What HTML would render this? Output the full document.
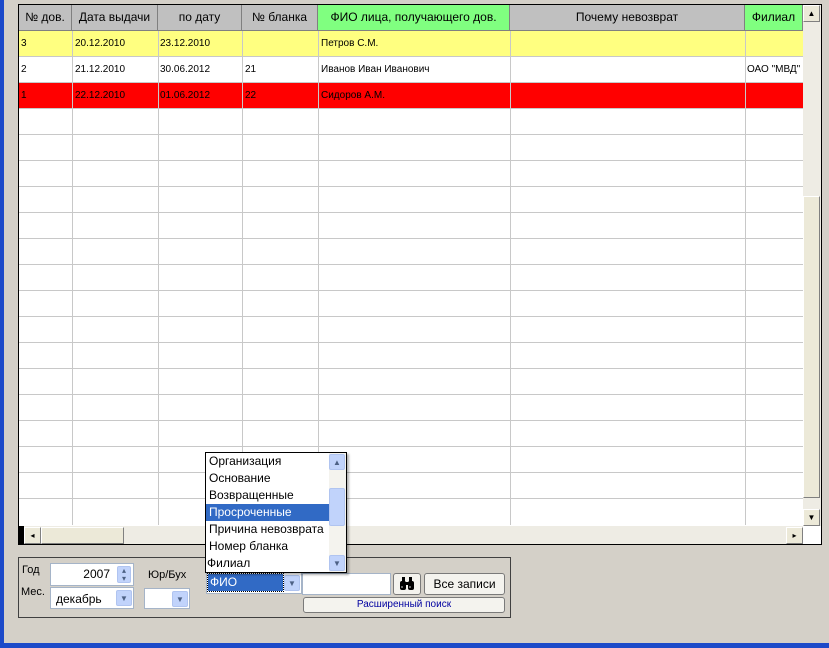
<!DOCTYPE html>
<html><head><meta charset="utf-8"><style>
*{box-sizing:border-box;margin:0;padding:0}
body{width:829px;height:648px;background:#d4d0c8;position:relative;overflow:hidden;font-family:"Liberation Sans","DejaVu Sans",sans-serif;font-size:11px;color:#000}
.a{position:absolute}
.hd{position:absolute;top:5px;height:26px;background:#c0c0c0;border-right:1px solid #808080;border-bottom:1px solid #808080;font-size:12px;line-height:25px;text-align:center;white-space:nowrap;overflow:hidden}
.g{background:#80ff80}
.vl{position:absolute;top:31px;height:494px;width:1px;background:#c8c8c8}
.hl{position:absolute;left:19px;width:784px;height:1px;background:#c8c8c8}
.c{position:absolute;font-size:10px;line-height:26px;white-space:nowrap}
.btn{position:absolute;background:#f4f3ee;border:1px solid #7a7a7a;border-radius:3px;text-align:center}
.arr{position:absolute;background:#c1d3fb;border:1px solid #b0c4f0;border-radius:2px;color:#4d6185;font-size:8px;text-align:center}
.sb{position:absolute;background:#ece9d8;border:1px solid;border-color:#fff #808080 #808080 #fff;font-size:8px;text-align:center;line-height:15px}
</style></head><body>
<div class="a" style="left:0;top:0;width:4px;height:648px;background:#1c4ac9"></div>
<div class="a" style="left:0;top:643px;width:829px;height:5px;background:#1c4ac9"></div>
<div class="a" style="left:18px;top:4px;width:804px;height:541px;border:1px solid #000;background:#fff"></div>
<div class="hd" style="left:19px;width:53px">№ дов.</div>
<div class="hd" style="left:72px;width:86px">Дата выдачи</div>
<div class="hd" style="left:158px;width:84px">по дату</div>
<div class="hd" style="left:242px;width:76px">№ бланка</div>
<div class="hd g" style="left:318px;width:192px">ФИО лица, получающего дов.</div>
<div class="hd" style="left:510px;width:235px">Почему невозврат</div>
<div class="hd g" style="left:745px;width:58px">Филиал</div>
<div class="a" style="left:19px;top:31px;width:784px;height:26px;background:#ffff80"></div>
<div class="a" style="left:19px;top:83px;width:784px;height:26px;background:#ff0000"></div>
<div class="vl" style="left:72px"></div><div class="vl" style="left:158px"></div><div class="vl" style="left:242px"></div><div class="vl" style="left:318px"></div><div class="vl" style="left:510px"></div><div class="vl" style="left:745px"></div>
<div class="hl" style="top:56px"></div><div class="hl" style="top:82px"></div><div class="hl" style="top:108px"></div><div class="hl" style="top:134px"></div><div class="hl" style="top:160px"></div><div class="hl" style="top:186px"></div><div class="hl" style="top:212px"></div><div class="hl" style="top:238px"></div><div class="hl" style="top:264px"></div><div class="hl" style="top:290px"></div><div class="hl" style="top:316px"></div><div class="hl" style="top:342px"></div><div class="hl" style="top:368px"></div><div class="hl" style="top:394px"></div><div class="hl" style="top:420px"></div><div class="hl" style="top:446px"></div><div class="hl" style="top:472px"></div><div class="hl" style="top:498px"></div>
<div class="c" style="left:21px;top:31px">3</div><div class="c" style="left:75px;top:31px">20.12.2010</div><div class="c" style="left:160px;top:31px">23.12.2010</div><div class="c" style="left:321px;top:31px">Петров С.М.</div>
<div class="c" style="left:21px;top:57px">2</div><div class="c" style="left:75px;top:57px">21.12.2010</div><div class="c" style="left:160px;top:57px">30.06.2012</div><div class="c" style="left:245px;top:57px">21</div><div class="c" style="left:321px;top:57px">Иванов Иван Иванович</div><div class="c" style="left:747px;top:57px;width:56px;overflow:hidden">ОАО "МВД"</div>
<div class="c" style="left:21px;top:83px">1</div><div class="c" style="left:75px;top:83px">22.12.2010</div><div class="c" style="left:160px;top:83px">01.06.2012</div><div class="c" style="left:245px;top:83px">22</div><div class="c" style="left:321px;top:83px">Сидоров А.М.</div>
<div class="a" style="left:803px;top:5px;width:18px;height:521px;background:#eeece4"></div>
<div class="sb" style="left:803px;top:5px;width:17px;height:17px">▲</div>
<div class="sb" style="left:803px;top:196px;width:17px;height:302px"></div>
<div class="sb" style="left:803px;top:509px;width:17px;height:17px">▼</div>
<div class="a" style="left:19px;top:526px;width:784px;height:18px;background:#eeece4"></div>
<div class="a" style="left:19px;top:526px;width:5px;height:18px;background:#000"></div>
<div class="sb" style="left:24px;top:527px;width:17px;height:17px">◂</div>
<div class="sb" style="left:41px;top:527px;width:83px;height:17px"></div>
<div class="sb" style="left:786px;top:527px;width:17px;height:17px">▸</div>
<div class="a" style="left:18px;top:557px;width:493px;height:61px;border:1px solid #404040"></div>
<div class="a" style="left:22px;top:564px;font-size:11px">Год</div>
<div class="a" style="left:21px;top:586px;font-size:11px">Мес.</div>
<div class="a" style="left:50px;top:563px;width:84px;height:23px;background:#fff;border:1px solid #a5b4c8;font-size:12px;line-height:21px;text-align:right;padding-right:23px">2007</div>
<div class="arr" style="left:117px;top:566px;width:14px;height:17px;line-height:8px">▴<br>▾</div>
<div class="a" style="left:50px;top:587px;width:84px;height:22px;background:#fff;border:1px solid #a5b4c8;font-size:12px;line-height:22px;padding-left:5px">декабрь</div>
<div class="arr" style="left:116px;top:590px;width:16px;height:16px;line-height:15px">▼</div>
<div class="a" style="left:148px;top:569px;font-size:11px">Юр/Бух</div>
<div class="a" style="left:144px;top:588px;width:46px;height:21px;background:#fff;border:1px solid #a5b4c8"></div>
<div class="arr" style="left:172px;top:591px;width:16px;height:16px;line-height:15px">▼</div>
<div class="a" style="left:206px;top:572px;width:96px;height:22px;background:#fff;border:1px solid #a5b4c8"></div>
<div class="a" style="left:208px;top:574px;width:75px;height:17px;background:#316ac5;color:#fff;font-size:12px;line-height:17px;padding-left:2px;outline:1px dotted #000">ФИО</div>
<div class="arr" style="left:284px;top:575px;width:16px;height:16px;line-height:15px">▼</div>
<div class="a" style="left:302px;top:573px;width:89px;height:22px;background:#fff;border:1px solid #a5b4c8"></div>
<div class="btn" style="left:393px;top:573px;width:28px;height:22px"><svg width="16" height="14" viewBox="0 0 16 14" style="margin-top:3px"><rect x="3" y="0" width="3" height="5" fill="#000"/><rect x="10" y="0" width="3" height="5" fill="#000"/><rect x="1" y="4" width="6" height="9" rx="2" fill="#000"/><rect x="9" y="4" width="6" height="9" rx="2" fill="#000"/><rect x="6" y="5" width="4" height="3" fill="#000"/><circle cx="3" cy="10" r="1" fill="#888"/><circle cx="11" cy="10" r="1" fill="#888"/></svg></div>
<div class="btn" style="left:424px;top:573px;width:81px;height:22px;font-size:12px;line-height:20px">Все записи</div>
<div class="btn" style="left:303px;top:597px;width:202px;height:16px;font-size:10px;line-height:14px;color:#0000a0">Расширенный поиск</div>
<div class="a" style="left:205px;top:452px;width:142px;height:121px;background:#fff;border:1px solid #000;font-size:12px;line-height:17px;box-shadow:2px 2px 2px rgba(0,0,0,.3)">
<div style="padding-left:3px">Организация</div>
<div style="padding-left:3px">Основание</div>
<div style="padding-left:3px">Возвращенные</div>
<div style="padding-left:3px;background:#316ac5;color:#fff;width:123px">Просроченные</div>
<div style="padding-left:3px">Причина невозврата</div>
<div style="padding-left:3px">Номер бланка</div>
<div style="padding-left:1px">Филиал</div>
</div>
<div class="a" style="left:329px;top:453px;width:17px;height:119px;background:#f4f3ee"></div>
<div class="arr" style="left:329px;top:454px;width:16px;height:16px;line-height:15px">▲</div>
<div class="arr" style="left:329px;top:488px;width:16px;height:38px"></div>
<div class="arr" style="left:329px;top:555px;width:16px;height:16px;line-height:15px">▼</div>
</body></html>
